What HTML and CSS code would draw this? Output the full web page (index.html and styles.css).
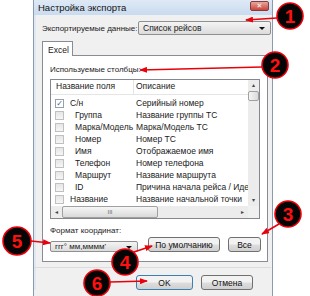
FILE: index.html
```html
<!DOCTYPE html>
<html lang="ru">
<head>
    <meta charset="UTF-8">
    <title>Настройка экспорта</title>
    <link rel="stylesheet" href="styles.css">
</head>
<body>
    <div class="stage">
        <div class="window">
            <div class="titlebar">
                <span class="title">Настройка экспорта</span>
                <span class="close">&#10005;</span>
            </div>
            <div class="client">
                <div class="data-row">
                    <span>Экспортируемые данные:</span>
                    <div class="combo wide">Список рейсов<span class="caret"></span></div>
                </div>
                <div class="tabs">
                    <div class="tab">Excel</div>
                </div>
                <div class="panel">
                    <div class="label">Используемые столбцы:</div>
                    <div class="listbox">
                        <div class="list-main">
                            <div class="list-head">
                                <div class="col-name">Название поля</div>
                                <div class="col-desc">Описание</div>
                            </div>
                            <div class="rows">
                                <div class="row"><span class="col-name"><i class="check on">&#10003;</i>С/н</span><span class="col-desc">Серийный номер</span></div>
                                <div class="row"><span class="col-name"><i class="check"></i><b>Группа</b></span><span class="col-desc">Название группы ТС</span></div>
                                <div class="row"><span class="col-name"><i class="check"></i><b>Марка/Модель</b></span><span class="col-desc">Марка/Модель ТС</span></div>
                                <div class="row"><span class="col-name"><i class="check"></i><b>Номер</b></span><span class="col-desc">Номер ТС</span></div>
                                <div class="row"><span class="col-name"><i class="check"></i><b>Имя</b></span><span class="col-desc">Отображаемое имя</span></div>
                                <div class="row"><span class="col-name"><i class="check"></i><b>Телефон</b></span><span class="col-desc">Номер телефона</span></div>
                                <div class="row"><span class="col-name"><i class="check"></i><b>Маршрут</b></span><span class="col-desc">Название маршрута</span></div>
                                <div class="row"><span class="col-name"><i class="check"></i><b>ID</b></span><span class="col-desc">Причина начала рейса / Иден</span></div>
                                <div class="row"><span class="col-name"><i class="check"></i>Название</span><span class="col-desc">Название начальной точки</span></div>
                                <div class="row"><span class="col-name"><i class="check"></i></span></div>
                            </div>
                            <div class="hscroll">
                                <span class="arrow">&#9666;</span>
                                <span class="thumb">III</span>
                                <span class="track"></span>
                                <span class="arrow">&#9656;</span>
                            </div>
                        </div>
                        <div class="vscroll">
                            <span class="arrow">&#9652;</span>
                            <span class="vthumb"></span>
                            <span class="track"></span>
                            <span class="arrow">&#9662;</span>
                            <span class="corner"></span>
                        </div>
                    </div>
                    <div class="label format">Формат координат:</div>
                    <div class="controls">
                        <div class="combo small">ггг° мм,мммм'<span class="caret"></span></div>
                        <button class="btn default-btn">По умолчанию</button>
                        <button class="btn all-btn">Все</button>
                    </div>
                </div>
                <div class="footer">
                    <button class="btn ok">OK</button>
                    <button class="btn cancel">Отмена</button>
                </div>
            </div>
        </div>

        <svg class="marks" width="310" height="296" viewBox="0 0 310 296">
            <defs>
                <marker id="head" viewBox="0 0 8 6" refX="7" refY="3" markerWidth="8" markerHeight="6" orient="auto" markerUnits="userSpaceOnUse">
                    <path d="M0 0 L8 3 L0 6 Z" fill="#e8000a"/>
                </marker>
            </defs>
            <g stroke="#e8000a" stroke-width="1.5" marker-end="url(#head)">
                <line x1="277" y1="18" x2="246" y2="20"/>
                <line x1="262" y1="67" x2="140" y2="70"/>
                <line x1="279" y1="224" x2="262" y2="234"/>
                <line x1="134" y1="252" x2="152" y2="246"/>
                <line x1="31" y1="241" x2="50" y2="243"/>
                <line x1="110" y1="282" x2="147" y2="281"/>
            </g>
            <g class="dots">
                <circle cx="290" cy="16" r="13"/>
                <circle cx="275" cy="65" r="13"/>
                <circle cx="288" cy="214" r="13"/>
                <circle cx="125" cy="262" r="13"/>
                <circle cx="17" cy="241" r="14"/>
                <circle cx="97" cy="283" r="13"/>
            </g>
            <g class="nums">
                <text x="290" y="23">1</text>
                <text x="275" y="72">2</text>
                <text x="288" y="221">3</text>
                <text x="125" y="269">4</text>
                <text x="17" y="248">5</text>
                <text x="97" y="290">6</text>
            </g>
        </svg>
    </div>
</body>
</html>
```

FILE: styles.css
```css
body {
    margin: 0;
    background: #fff;
    font-family: 'Liberation Sans', 'DejaVu Sans', sans-serif;
    font-size: 8.5px;
    color: #1a1a1a;
}
.stage {
    position: relative;
    width: 310px;
    height: 296px;
    overflow: hidden;
    padding-left: 33px;
    box-sizing: border-box;
}
.window {
    width: 240px;
    height: 310px;
    box-sizing: border-box;
    border: 1px solid #8a9ab0;
    border-top: none;
    background: #f0f0f0;
}
.titlebar {
    height: 15px;
    display: flex;
    align-items: center;
    justify-content: space-between;
    padding: 0 3px 0 4px;
    background: linear-gradient(#dfe9f5, #c9dbef);
}
.title {
    font-size: 9.5px;
    color: #111;
}
.close {
    width: 17px;
    height: 8px;
    margin-top: -3px;
    border: 1px solid #8a3a3a;
    border-radius: 2px;
    background: linear-gradient(#e8a69a, #c9443a);
    color: #fff;
    font-size: 7px;
    line-height: 8px;
    text-align: center;
    font-weight: bold;
}
.client {
    padding: 6px 1px 0 8px;
    background: #f0f0f0;
    box-shadow: inset 2px 0 0 #dfe7f1;
}
.data-row {
    display: flex;
    align-items: center;
    justify-content: space-between;
    height: 14px;
    white-space: nowrap;
    font-size: 8px;
}
.combo {
    position: relative;
    box-sizing: border-box;
    border: 1px solid #8e8f8f;
    border-radius: 2px;
    background: linear-gradient(#f4f4f4, #dcdcdc);
    padding-left: 4px;
    line-height: 12px;
    white-space: nowrap;
}
.combo.wide {
    width: 133px;
    height: 14px;
    font-size: 8.5px;
}
.caret {
    position: absolute;
    right: 5px;
    top: 5px;
    border-left: 3px solid transparent;
    border-right: 3px solid transparent;
    border-top: 3px solid #111;
}
.tabs {
    display: flex;
    margin-top: 5px;
    height: 15px;
}
.tab {
    width: 31px;
    box-sizing: border-box;
    border: 1px solid #898c95;
    border-bottom: none;
    background: #fff;
    padding: 3px 0 0 5px;
    position: relative;
    top: 1px;
}
.panel {
    width: 226px;
    height: 207px;
    box-sizing: border-box;
    border: 1px solid #898c95;
    background: #fff;
    padding: 9px 0 0 7px;
}
.label {
    line-height: 10px;
    font-size: 8px;
}
.listbox {
    display: flex;
    width: 210px;
    height: 140px;
    margin-top: 4px;
    box-sizing: border-box;
    border: 1px solid #828790;
    overflow: hidden;
}
.list-main {
    flex: 1;
    display: flex;
    flex-direction: column;
    overflow: hidden;
}
.list-head {
    display: flex;
    height: 14px;
    flex-shrink: 0;
    border-bottom: 1px solid #e5e5e5;
    line-height: 13px;
}
.list-head .col-desc {
    border-left: 1px solid #e5e5e5;
    padding-left: 2px;
}
.col-name {
    width: 82px;
    flex-shrink: 0;
    padding-left: 5px;
    box-sizing: border-box;
    white-space: nowrap;
}
.col-desc {
    flex: 1;
    white-space: nowrap;
    overflow: hidden;
    padding-left: 3px;
}
.rows {
    flex: 1;
    padding-top: 2px;
    overflow: hidden;
}
.row {
    display: flex;
    height: 12px;
    line-height: 12px;
}
.row .col-name {
    display: flex;
    align-items: center;
    padding-left: 4px;
}
.row b {
    font-weight: normal;
    margin-left: 5px;
}
.check {
    width: 7px;
    height: 7px;
    margin-right: 6px;
    flex-shrink: 0;
    border: 1px solid #c0c0c0;
    background: linear-gradient(#e6e6e6, #f6f6f6);
    font-style: normal;
    font-size: 8px;
    line-height: 7px;
    text-align: center;
    color: #3a5f99;
}
.check.on {
    background: #fff;
    border-color: #9aa0a8;
}
.hscroll {
    display: flex;
    height: 12px;
    flex-shrink: 0;
    background: #ececec;
    align-items: stretch;
}
.arrow {
    width: 11px;
    font-size: 6px;
    line-height: 12px;
    text-align: center;
    color: #444;
}
.thumb {
    width: 96px;
    box-sizing: border-box;
    border: 1px solid #a0a0a0;
    border-radius: 2px;
    background: linear-gradient(#f6f6f6, #dadada);
    font-size: 6px;
    line-height: 10px;
    text-align: center;
    color: #666;
}
.track {
    flex: 1;
}
.vscroll {
    width: 11px;
    display: flex;
    flex-direction: column;
    background: #ececec;
}
.vscroll .arrow {
    width: 11px;
    height: 11px;
    line-height: 11px;
}
.vthumb {
    height: 10px;
    box-sizing: border-box;
    border: 1px solid #a0a0a0;
    border-radius: 2px;
    background: linear-gradient(90deg, #f6f6f6, #dadada);
}
.corner {
    height: 12px;
    background: #f0f0f0;
}
.format {
    margin-top: 7px;
}
.controls {
    display: flex;
    align-items: flex-end;
    margin-top: 1px;
    height: 15px;
}
.combo.small {
    width: 88px;
    height: 11px;
    line-height: 9px;
    font-size: 8px;
}
.combo.small .caret {
    top: 4px;
}
.btn {
    box-sizing: border-box;
    height: 15px;
    padding: 0;
    border: 1px solid #707070;
    border-radius: 3px;
    background: linear-gradient(#f2f2f2 45%, #dddddd 55%, #cfcfcf);
    font-family: inherit;
    font-size: 8.5px;
    color: #111;
}
.default-btn {
    width: 72px;
    margin-left: 10px;
}
.all-btn {
    width: 33px;
    margin-left: 8px;
}
.footer {
    display: flex;
    margin-top: 5px;
    padding-left: 102px;
    padding-top: 7px;
    border-top: 1px solid #dcdcdc;
    margin-left: -8px;
}
.ok {
    width: 57px;
    border-color: #3c7fb1;
}
.cancel {
    width: 52px;
    margin-left: 8px;
}
.marks {
    position: absolute;
    left: 0;
    top: 0;
}
.dots circle {
    fill: #050505;
    stroke: #e8000a;
    stroke-width: 1.6;
}
.nums text {
    fill: #ff1010;
    font-family: 'Liberation Sans', sans-serif;
    font-weight: bold;
    font-size: 19px;
    text-anchor: middle;
}
```
